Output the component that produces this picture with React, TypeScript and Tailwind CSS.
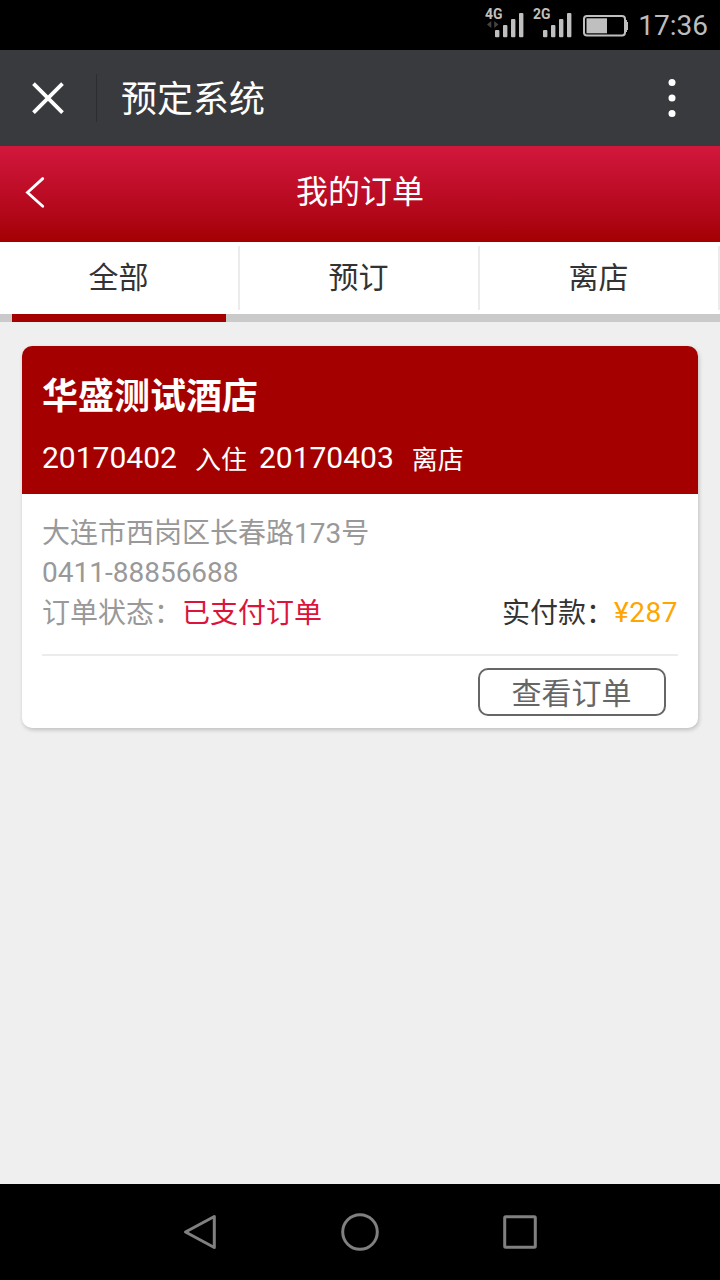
const tabs = [
  { id: "all", label: "全部" },
  { id: "booked", label: "预订" },
  { id: "left", label: "离店" },
];

const order = {
  hotel: "华盛测试酒店",
  checkIn: "20170402",
  checkOut: "20170403",
  address: "大连市西岗区长春路173号",
  phone: "0411-88856688",
  status: "已支付订单",
  paid: "¥287",
};

const Signal = ({ label, roaming }: { label: string; roaming?: boolean }) => (
  <svg className="h-10 w-10" viewBox="0 0 40 40" fill="#bfbfbf">
    <text
      x="0"
      y="18.7"
      fontSize="14.5"
      fontWeight="700"
      fontFamily="Roboto"
      textLength="17.5"
      lengthAdjust="spacingAndGlyphs"
    >
      {label}
    </text>
    {roaming && (
      <path d="M2 24.5l4.3-3.5v7zM13.5 24.5l-4.3-3.5v7z" fill="#444" />
    )}
    <rect x="10" y="30" width="4.4" height="7.3" rx="1" />
    <rect x="18" y="25" width="4.4" height="12.3" rx="1" />
    <rect x="26" y="19" width="4.4" height="18.3" rx="1" />
    <rect x="34" y="13" width="4.4" height="24.3" rx="1" />
  </svg>
);

const StatusBar = () => (
  <div className="flex h-[50px] items-start justify-end bg-black pr-3">
    <div className="flex gap-2">
      <Signal label="4G" roaming />
      <Signal label="2G" />
    </div>
    <svg className="ml-[9px] mt-3 h-7 w-[46px]" viewBox="0 0 46 28" fill="none">
      <rect x="2" y="4" width="41" height="19.5" rx="3" stroke="#bfbfbf" strokeWidth="2" />
      <rect x="4.5" y="6.3" width="20.5" height="15" fill="#bfbfbf" />
      <path d="M43.5 8H45v2h1v8h-1v2h-1.5z" fill="#bfbfbf" />
    </svg>
    <span className="ml-2.5 mt-2 text-[28px] leading-9 text-[#bdbdbd]">
      17:36
    </span>
  </div>
);

const TitleBar = () => (
  <div className="flex h-24 items-center bg-[#393a3e] pr-11 pl-8 text-white">
    <button aria-label="关闭">
      <svg className="h-8 w-8" viewBox="0 0 32 32" stroke="currentColor" strokeWidth="3.8">
        <path d="M1.5 1.7l29 29M30.5 1.7l-29 29" />
      </svg>
    </button>
    <span className="ml-8 h-12 w-px bg-[#2c2d30]" />
    <h1 className="ml-6 flex-1 pt-1 text-[36px] leading-[48px]">预定系统</h1>
    <button aria-label="更多">
      <svg className="h-10 w-2" viewBox="0 0 8 40" fill="currentColor">
        <circle cx="4" cy="4.5" r="3.5" />
        <circle cx="4" cy="20" r="3.5" />
        <circle cx="4" cy="35.5" r="3.5" />
      </svg>
    </button>
  </div>
);

const Header = () => (
  <header className="grid h-24 grid-cols-[1fr_auto_1fr] items-center bg-linear-to-b from-[#d3173d] to-[#a40000] px-6 pb-1 text-white">
    <button aria-label="返回">
      <svg className="h-8 w-6" viewBox="0 0 24 32" fill="none" stroke="currentColor" strokeWidth="2.8" strokeLinecap="round">
        <path d="M18.7 2.6L3.5 16.5l15.2 13.7" />
      </svg>
    </button>
    <h2 className="text-[32px] leading-[48px]">我的订单</h2>
  </header>
);

const Tabs = () => (
  <nav className="bg-white">
    <div className="grid h-[72px] grid-cols-3 py-1">
      {tabs.map(({ id, label }) => (
        <button
          key={id}
          className="border-r-2 border-[#ececec] pr-px text-[30px] leading-[62px] text-[#333]"
        >
          {label}
        </button>
      ))}
    </div>
    <div className="flex h-2 bg-[#cacaca] pl-3">
      <span className="w-[214px] bg-[#a40000]" />
    </div>
  </nav>
);

const OrderCard = () => (
  <article className="mx-[22px] mt-6 overflow-hidden rounded-[10px] bg-white shadow-[1px_2px_4px_rgba(0,0,0,0.2)]">
    <div className="h-[148px] bg-[#a40000] px-5 pt-[26px] text-white">
      <h3 className="text-[36px] leading-[50px] font-bold">{order.hotel}</h3>
      <div className="mt-3.5 flex text-[30px] leading-[44px]">
        <span>{order.checkIn}</span>
        <span className="ml-[18px] pt-0.5 text-[26px]">入住</span>
        <span className="ml-3">{order.checkOut}</span>
        <span className="ml-[18px] pt-0.5 text-[26px]">离店</span>
      </div>
    </div>
    <div className="px-5 pt-5 text-[28px] leading-10 text-[#999]">
      <p>{order.address}</p>
      <p className="-mt-px">{order.phone}</p>
      <div className="mt-px flex justify-between">
        <p>
          订单状态：<span className="text-[#dc143c]">{order.status}</span>
        </p>
        <p className="flex text-[#333]">
          实付款：
          <span className="-mt-px w-16 tracking-[0.5px] text-[#ffa500]">
            {order.paid}
          </span>
        </p>
      </div>
      <div className="mt-5 flex justify-end border-t-2 border-[#ececec] py-3 pr-3">
        <button className="h-12 w-[188px] rounded-[10px] border-2 border-[#666] pt-0.5 pr-px text-[30px] leading-[44px] text-[#666]">
          查看订单
        </button>
      </div>
    </div>
  </article>
);

const NavBar = () => (
  <div className="flex h-24 items-center justify-center gap-[120px] bg-black">
    {[
      <path key="back" d="M5.5 20L34.3 4.5v31z" />,
      <circle key="home" cx="20" cy="20" r="17.3" />,
      <rect key="recent" x="4.7" y="4.7" width="30.6" height="30.6" rx="1" />,
    ].map((shape, i) => (
      <svg
        key={i}
        className="h-10 w-10"
        viewBox="0 0 40 40"
        fill="none"
        stroke="#808080"
        strokeWidth="3"
        strokeLinejoin="round"
      >
        {shape}
      </svg>
    ))}
  </div>
);

const App = () => (
  <div className="flex h-[1280px] w-[720px] flex-col overflow-hidden bg-[#efefef] font-[Roboto,'Noto_Sans_CJK_SC',sans-serif]">
    <StatusBar />
    <TitleBar />
    <Header />
    <Tabs />
    <main className="flex-1">
      <OrderCard />
    </main>
    <NavBar />
  </div>
);

export default App;
